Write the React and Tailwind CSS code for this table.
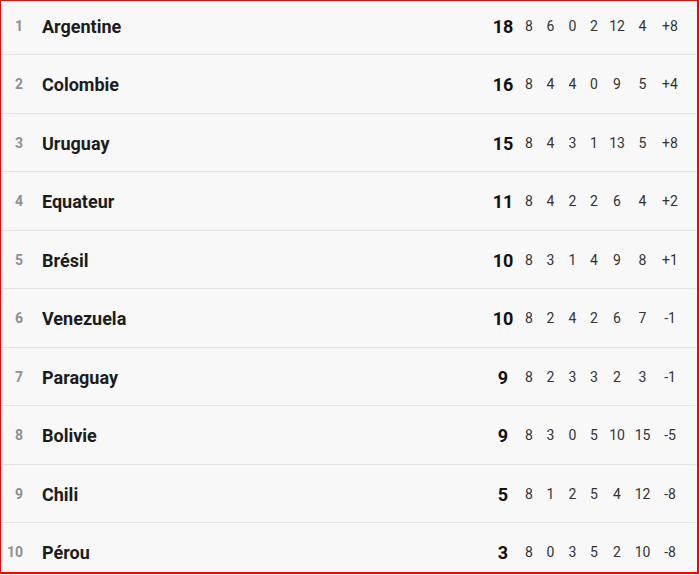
import React from "react";

const teams = [
  { rank: 1, name: "Argentine", pts: 18, stats: [8, 6, 0, 2, 12, 4, "+8"] },
  { rank: 2, name: "Colombie", pts: 16, stats: [8, 4, 4, 0, 9, 5, "+4"] },
  { rank: 3, name: "Uruguay", pts: 15, stats: [8, 4, 3, 1, 13, 5, "+8"] },
  { rank: 4, name: "Equateur", pts: 11, stats: [8, 4, 2, 2, 6, 4, "+2"] },
  { rank: 5, name: "Brésil", pts: 10, stats: [8, 3, 1, 4, 9, 8, "+1"] },
  { rank: 6, name: "Venezuela", pts: 10, stats: [8, 2, 4, 2, 6, 7, "-1"] },
  { rank: 7, name: "Paraguay", pts: 9, stats: [8, 2, 3, 3, 2, 3, "-1"] },
  { rank: 8, name: "Bolivie", pts: 9, stats: [8, 3, 0, 5, 10, 15, "-5"] },
  { rank: 9, name: "Chili", pts: 5, stats: [8, 1, 2, 5, 4, 12, "-8"] },
  { rank: 10, name: "Pérou", pts: 3, stats: [8, 0, 3, 5, 2, 10, "-8"] },
];

// widths of the stat columns (J, G, N, P, BP, BC, Diff)
const colWidths = ["w-[26px]", "w-[17px]", "w-[27px]", "w-[16px]", "w-[30px]", "w-[21px]", "w-[34px]"];

export default function App() {
  return (
    <div className="w-[699px] h-[575px] bg-white">
      <div
        className="w-[699px] h-[574px] overflow-hidden bg-[#f8f8f8] border-l border-t border-r-2 border-b-2 border-[#ff0000]"
        style={{ fontFamily: "Roboto, 'Liberation Sans', sans-serif" }}
      >
        <div className="-mt-[4.5px]">
          {teams.map((t) => (
            <div key={t.rank} className="h-[58.5px] pt-[2px] flex items-center border-b border-[#e2e2e2]">
              <div className="w-[22px] text-right text-[14px] font-bold text-[#8f8f8f]">{t.rank}</div>
              <div className="ml-[19px] flex-1 text-[18px] font-bold text-[#1c1c1c]">{t.name}</div>
              <div className="w-[26px] text-center text-[18px] font-bold text-[#111]">{t.pts}</div>
              {t.stats.map((s, i) => (
                <div key={i} className={`${colWidths[i]} text-center text-[14px] text-[#333]`}>
                  {s}
                </div>
              ))}
              <div className="w-[10px]" />
            </div>
          ))}
        </div>
      </div>
    </div>
  );
}
